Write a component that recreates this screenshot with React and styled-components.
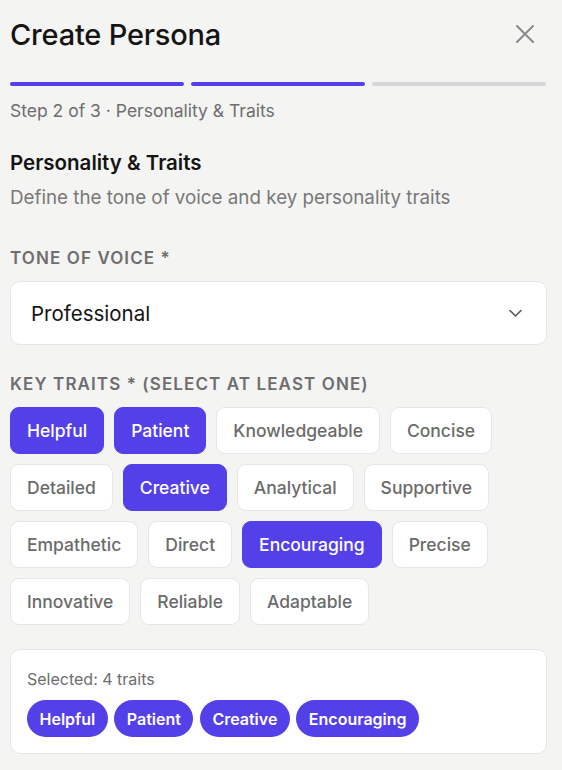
import styled, { createGlobalStyle } from 'styled-components'

const GlobalStyle = createGlobalStyle`
  html, body {
    margin: 0;
    padding: 0;
    background: #f4f4f3;
    font-family: Inter, "Noto Sans", sans-serif;
  }
`

const PRIMARY = '#5440e9'

const Page = styled.div`
  width: 562px;
  box-sizing: border-box;
  padding: 0 15px 0 10px;
  display: flex;
  flex-direction: column;
`

const Header = styled.div`
  display: flex;
  align-items: center;
  justify-content: space-between;
  height: 68px;
`

const Title = styled.h1`
  margin: 0;
  font-size: 29px;
  font-weight: 500;
  color: #141414;
  letter-spacing: -0.2px;
`

const CloseButton = styled.button`
  border: none;
  background: none;
  padding: 0;
  width: 20px;
  height: 20px;
  margin-right: 12px;
  display: flex;
  align-items: center;
  justify-content: center;
  cursor: pointer;
`

const Progress = styled.div`
  display: grid;
  grid-template-columns: repeat(3, 1fr);
  gap: 7px;
  margin-top: 14px;
  padding-right: 1px;
`

const Bar = styled.div`
  height: 4px;
  border-radius: 2px;
  background: ${p => (p.$done ? PRIMARY : '#d6d6d6')};
`

const StepText = styled.div`
  margin-top: 14px;
  font-size: 17.5px;
  color: #6e6e6e;
`

const SectionTitle = styled.h2`
  margin: 29px 0 0;
  font-size: 20.5px;
  font-weight: 600;
  color: #141414;
`

const SectionDesc = styled.p`
  margin: 11px 0 0;
  font-size: 18.8px;
  color: #787878;
`

const Label = styled.div`
  margin-top: ${p => p.$top || 38}px;
  font-size: 17px;
  font-weight: 600;
  letter-spacing: 1.1px;
  color: #6e6e6e;
`

const Select = styled.div`
  margin-top: 13px;
  height: 64px;
  box-sizing: border-box;
  background: #fff;
  border: 1px solid #e6e6e6;
  border-radius: 10px;
  display: flex;
  align-items: center;
  justify-content: space-between;
  padding: 0 24px 0 20px;
  font-size: 20.5px;
  color: #141414;
`

const Chips = styled.div`
  margin-top: 13px;
  display: flex;
  flex-wrap: wrap;
  gap: 10px 10px;
  padding-right: 40px;
`

const Chip = styled.button`
  height: 47px;
  box-sizing: border-box;
  padding: 0 16px;
  border-radius: 9px;
  border: 1px solid ${p => (p.$on ? PRIMARY : '#e6e6e6')};
  background: ${p => (p.$on ? PRIMARY : '#fff')};
  color: ${p => (p.$on ? '#fff' : '#6b6b6b')};
  font-family: inherit;
  font-size: 17.5px;
  font-weight: 500;
  cursor: pointer;
`

const Summary = styled.div`
  margin-top: 24px;
  background: #fff;
  border: 1px solid #e6e6e6;
  border-radius: 10px;
  padding: 19px 15px 16px 16px;
`

const SummaryText = styled.div`
  font-size: 16px;
  color: #6e6e6e;
`

const Pills = styled.div`
  margin-top: 11px;
  display: flex;
  flex-wrap: wrap;
  gap: 6.5px;
`

const Pill = styled.span`
  height: 37px;
  display: inline-flex;
  align-items: center;
  padding: 0 12.5px;
  border-radius: 19px;
  background: ${PRIMARY};
  color: #fff;
  font-size: 16px;
  font-weight: 600;
`

const traits = [
  'Helpful', 'Patient', 'Knowledgeable', 'Concise',
  'Detailed', 'Creative', 'Analytical', 'Supportive',
  'Empathetic', 'Direct', 'Encouraging', 'Precise',
  'Innovative', 'Reliable', 'Adaptable',
]

const selected = ['Helpful', 'Patient', 'Creative', 'Encouraging']

const App = () => {
  return (
    <>
      <GlobalStyle />
      <Page>
        <Header>
          <Title>Create Persona</Title>
          <CloseButton aria-label="Close">
            <svg width="18" height="18" viewBox="0 0 18 18" fill="none" stroke="#8a8a8a" strokeWidth="2" strokeLinecap="round">
              <path d="M1 1L17 17M17 1L1 17" />
            </svg>
          </CloseButton>
        </Header>
        <Progress>
          <Bar $done />
          <Bar $done />
          <Bar />
        </Progress>
        <StepText>Step 2 of 3 · Personality &amp; Traits</StepText>

        <SectionTitle>Personality &amp; Traits</SectionTitle>
        <SectionDesc>Define the tone of voice and key personality traits</SectionDesc>

        <Label $top={39}>TONE OF VOICE *</Label>
        <Select>
          <span>Professional</span>
          <svg width="13" height="8" viewBox="0 0 13 8" fill="none" stroke="#555" strokeWidth="1.6" strokeLinecap="round" strokeLinejoin="round">
            <path d="M1 1.5l5.5 5.5 5.5-5.5" />
          </svg>
        </Select>

        <Label $top={29}>KEY TRAITS * (SELECT AT LEAST ONE)</Label>
        <Chips>
          {traits.map(t => (
            <Chip key={t} $on={selected.includes(t)}>{t}</Chip>
          ))}
        </Chips>

        <Summary>
          <SummaryText>Selected: {selected.length} traits</SummaryText>
          <Pills>
            {selected.map(t => <Pill key={t}>{t}</Pill>)}
          </Pills>
        </Summary>
      </Page>
    </>
  )
}

export default App
